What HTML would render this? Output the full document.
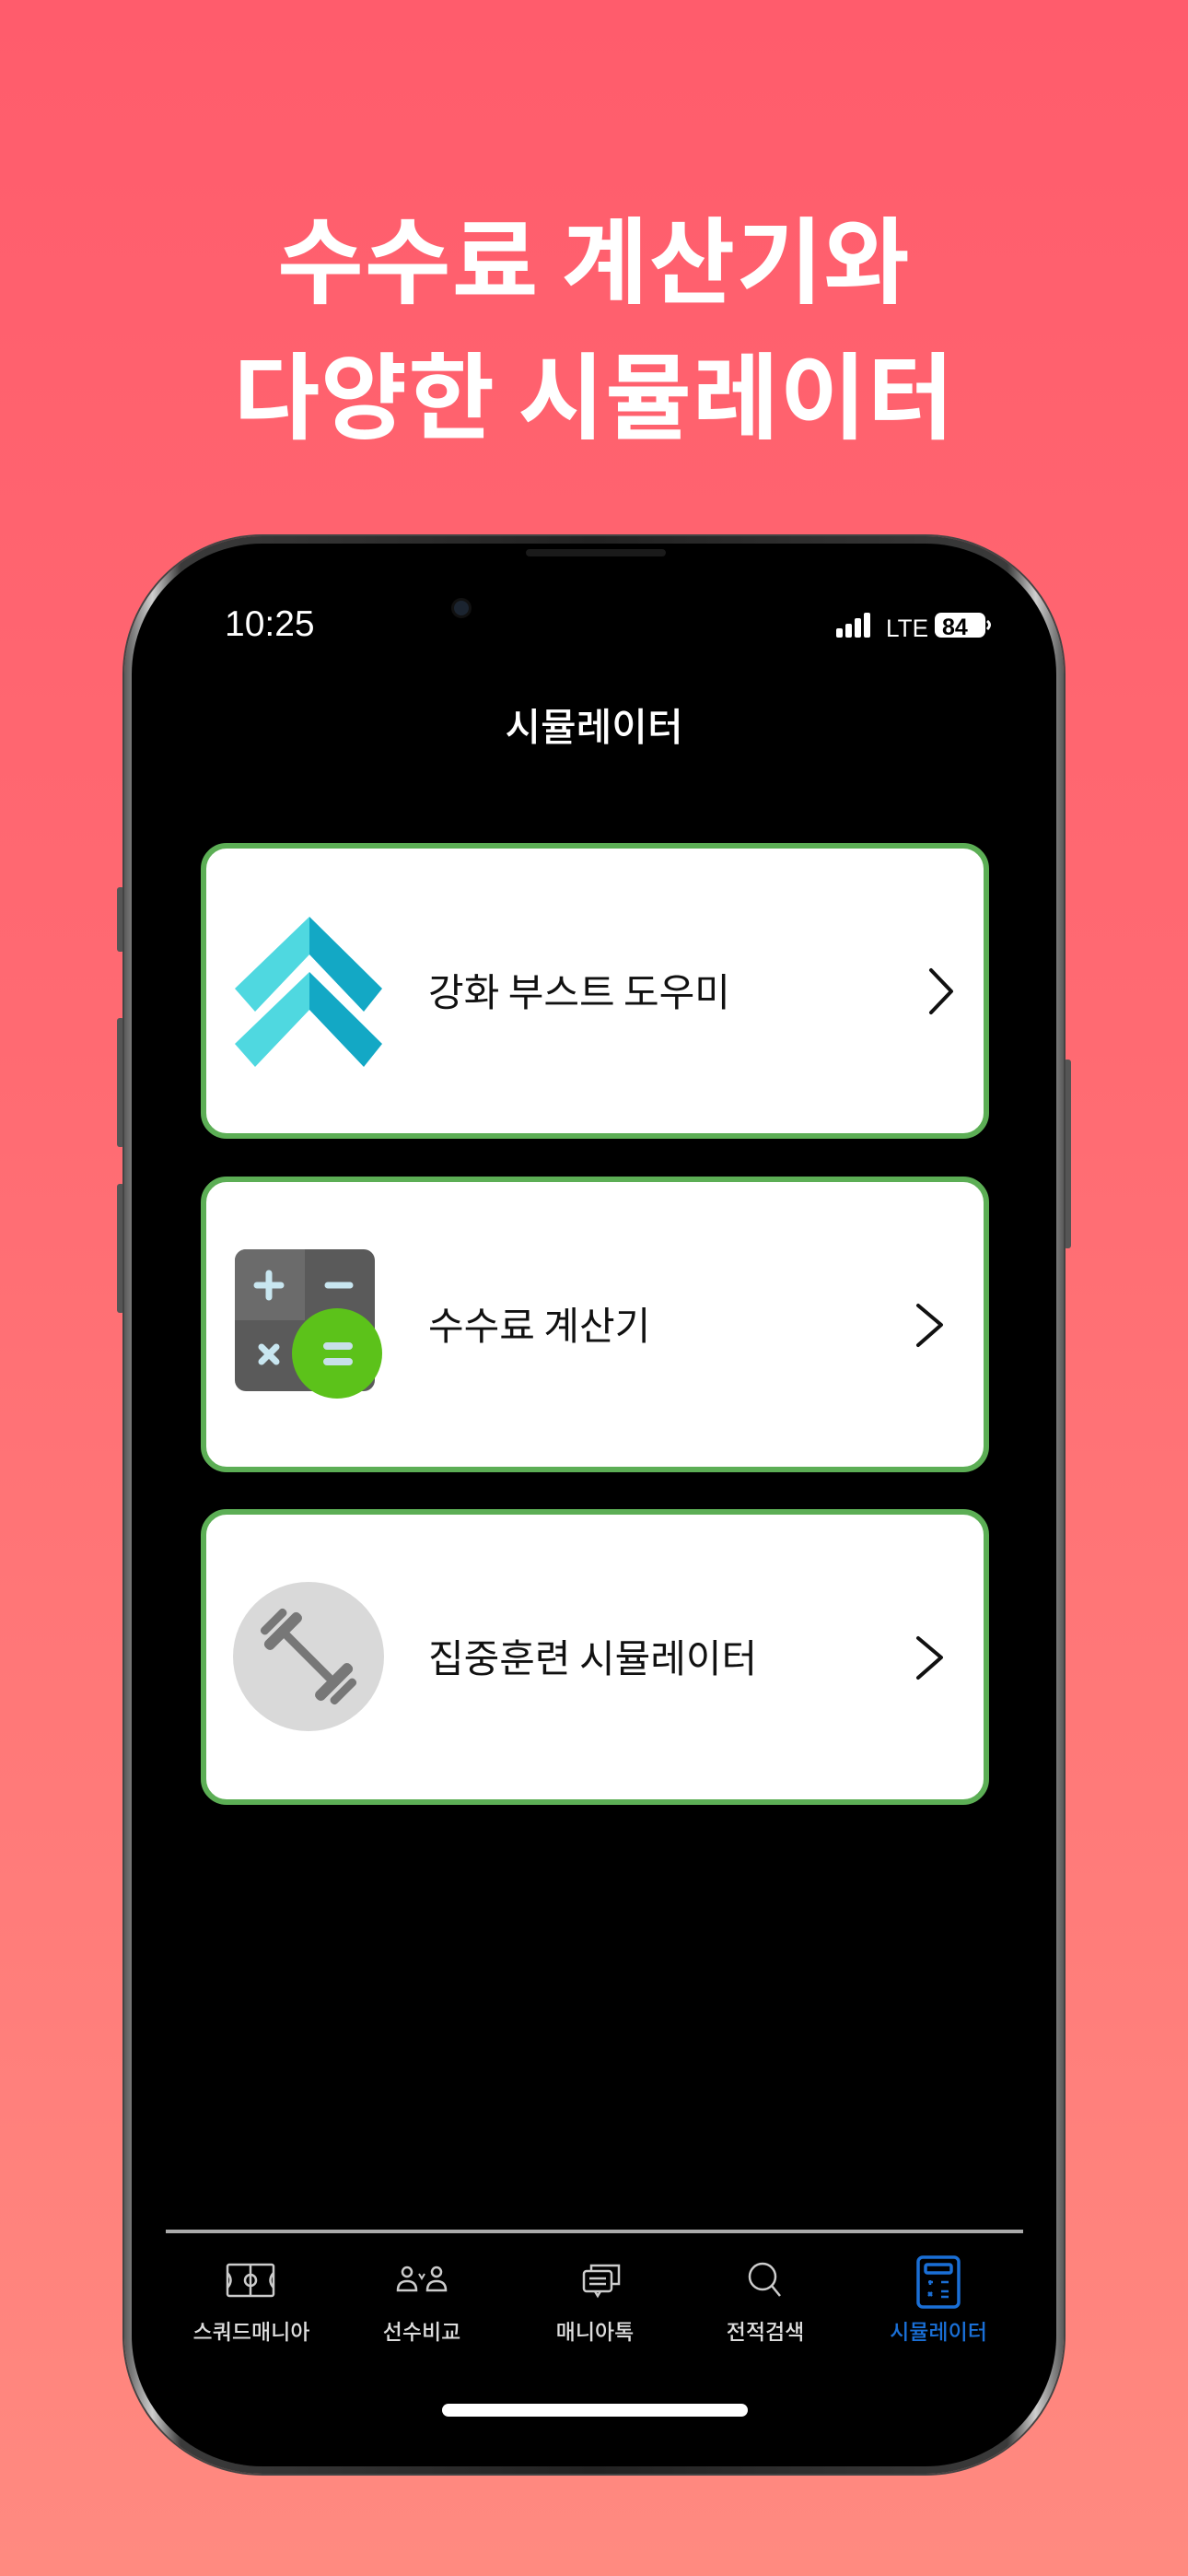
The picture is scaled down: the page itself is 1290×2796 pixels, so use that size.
<!DOCTYPE html>
<html><head><meta charset="utf-8">
<style>
*{margin:0;padding:0;box-sizing:border-box}
html,body{width:1290px;height:2796px;overflow:hidden}
body{background:linear-gradient(180deg,#ff5c6c 0%,#ff6a72 40%,#ff8a80 100%);font-family:"Liberation Sans","Noto Sans CJK KR",sans-serif;position:relative}
.h{position:absolute;left:0;width:1290px;text-align:center;color:#fff;font-weight:700;font-size:102px;letter-spacing:1px;line-height:1;font-family:"Noto Sans CJK KR",sans-serif}
.phone{position:absolute;left:135px;top:582px;width:1020px;height:2103px;border-radius:150px;background:linear-gradient(90deg,#5a5a5a,#cfcfcf 3%,#3a3a3a 6%,#222 50%,#3a3a3a 94%,#cfcfcf 97%,#5a5a5a);box-shadow:0 0 0 2px #444}
.bez{position:absolute;left:8px;top:8px;right:8px;bottom:8px;border-radius:142px;background:#000}
.btn{position:absolute;background:#555;border-radius:3px}
.card{position:absolute;left:218px;width:856px;height:321px;background:#fff;border:6px solid #5cae55;border-radius:28px}
.ct{position:absolute;left:465px;font-size:42px;color:#111;font-family:"Noto Sans CJK KR",sans-serif;font-weight:400;line-height:1}
.tab{position:absolute;top:2512px;width:200px;text-align:center;font-size:23px;color:#ddd;font-family:"Noto Sans CJK KR",sans-serif;font-weight:500}
</style></head><body>
<div class="h" style="top:227px">수수료 계산기와</div>
<div class="h" style="top:374px">다양한 시뮬레이터</div>

<div class="btn" style="left:127px;top:963px;width:8px;height:70px"></div>
<div class="btn" style="left:127px;top:1105px;width:8px;height:140px"></div>
<div class="btn" style="left:127px;top:1285px;width:8px;height:140px"></div>
<div class="btn" style="left:1155px;top:1150px;width:8px;height:205px"></div>

<div class="phone"><div class="bez"></div></div>
<div style="position:absolute;left:571px;top:596px;width:152px;height:8px;border-radius:4px;background:#1a1a1a"></div>
<div style="position:absolute;left:493px;top:652px;width:16px;height:16px;border-radius:50%;background:#1b2430;box-shadow:0 0 0 3px #111"></div>

<div style="position:absolute;left:244px;top:656px;color:#fff;font-size:39px;font-weight:500">10:25</div>
<svg style="position:absolute;left:908px;top:664px" width="170" height="30" viewBox="0 0 170 30">
<rect x="0" y="18" width="7" height="10" rx="2" fill="#fff"/><rect x="10" y="13" width="7" height="15" rx="2" fill="#fff"/><rect x="20" y="7" width="7" height="21" rx="2" fill="#fff"/><rect x="30" y="1" width="7" height="27" rx="2" fill="#fff"/>
<text x="54" y="27" font-family="Liberation Sans" font-size="27" fill="#fff" textLength="46" lengthAdjust="spacingAndGlyphs">LTE</text>
<rect x="107" y="1" width="55" height="27" rx="7" fill="#fff"/><text x="115" y="25" font-family="Liberation Sans" font-weight="700" font-size="25" fill="#000">84</text>
<path d="M164 10 q5 4 0 9" stroke="#fff" stroke-width="3" fill="none"/>
</svg>

<div style="position:absolute;left:0;width:1290px;top:756px;text-align:center;color:#fff;font-size:42px;font-weight:500;font-family:'Noto Sans CJK KR',sans-serif">시뮬레이터</div>

<div class="card" style="top:915px"></div>
<div class="card" style="top:1277px"></div>
<div class="card" style="top:1638px"></div>
<div class="ct" style="top:1054px">강화 부스트 도우미</div>
<div class="ct" style="top:1416px">수수료 계산기</div>
<div class="ct" style="top:1777px">집중훈련 시뮬레이터</div>

<svg style="position:absolute;left:0;top:0" width="1290" height="2796">
<polygon points="336,995 255,1073 277,1098 336,1036" fill="#4fd8e0"/>
<polygon points="336,995 415,1073 395,1098 336,1036" fill="#13a8c5"/>
<polygon points="336,1055 255,1133 277,1158 336,1096" fill="#4fd8e0"/>
<polygon points="336,1055 415,1133 395,1158 336,1096" fill="#13a8c5"/>
<path d="M1011 1053 L1033 1076 L1011 1099" stroke="#111" stroke-width="4" fill="none" stroke-linecap="round" stroke-linejoin="round"/>
<rect x="255" y="1356" width="152" height="154" rx="12" fill="#5a5a5a"/>
<path d="M267 1356 h64 v77 h-76 v-65 a12 12 0 0 1 12 -12z" fill="#6b6b6b"/>
<path d="M292 1382 v26 M279 1395 h26" stroke="#c8e6f0" stroke-width="7" stroke-linecap="round"/>
<path d="M356 1395 h24" stroke="#c8e6f0" stroke-width="7" stroke-linecap="round"/>
<path d="M284 1462 l16 16 M300 1462 l-16 16" stroke="#c8e6f0" stroke-width="7" stroke-linecap="round"/>
<ellipse cx="366" cy="1469" rx="49" ry="49" fill="#5cc21a"/>
<path d="M355 1461 h24 M355 1478 h24" stroke="#c8e0ea" stroke-width="8" stroke-linecap="round"/>
<path d="M997 1417 L1022 1438 L997 1460" stroke="#111" stroke-width="4" fill="none" stroke-linecap="round" stroke-linejoin="round"/>
<ellipse cx="335" cy="1798" rx="82" ry="81" fill="#d9d9d9"/>
<g transform="rotate(45 335 1798)" fill="#777">
<rect x="300" y="1794" width="70" height="9" rx="3"/>
<rect x="290" y="1772" width="12" height="52" rx="5"/>
<rect x="277" y="1780" width="9" height="36" rx="4"/>
<rect x="368" y="1772" width="12" height="52" rx="5"/>
<rect x="384" y="1780" width="9" height="36" rx="4"/>
</g>
<path d="M997 1778 L1022 1799 L997 1821" stroke="#111" stroke-width="4" fill="none" stroke-linecap="round" stroke-linejoin="round"/>
<rect x="180" y="2420" width="931" height="4" fill="#aaa"/>
<g stroke="#ccc" stroke-width="2.5" fill="none">
<rect x="247" y="2458" width="50" height="34" rx="2"/><path d="M272 2458 v34"/><circle cx="272" cy="2475" r="6"/><path d="M247 2467 q7 8 0 16 M297 2467 q-7 8 0 16"/>
<circle cx="442" cy="2466" r="5"/><path d="M432 2486 q0-10 10-10 q10 0 10 10 z"/>
<circle cx="474" cy="2466" r="5"/><path d="M464 2486 q0-10 10-10 q10 0 10 10 z"/><path d="M455 2468 l3 5 l3-5" stroke-width="2"/>
<rect x="634" y="2465" width="30" height="22" rx="3"/><path d="M642 2465 v-6 h30 v20 h-8"/><path d="M640 2473 h18 M640 2479 h18 M646 2487 l3 5 l3-5"/>
<circle cx="828" cy="2471" r="14"/><path d="M838 2481 l9 11"/>
</g>
<g stroke="#1a6fd6" stroke-width="3.5" fill="none">
<rect x="997" y="2450" width="44" height="54" rx="5"/><rect x="1005" y="2458" width="28" height="9" rx="2"/>
<path d="M1008 2477 h5 M1010 2475 v5 M1022 2477 h8 M1008 2488 l4 4 M1012 2488 l-4 4 M1022 2487 h8 M1022 2493 h8" stroke-width="2.5"/>
</g>
<rect x="480" y="2609" width="332" height="14" rx="7" fill="#fff"/>
</svg>
<div class="tab" style="left:173px">스쿼드매니아</div>
<div class="tab" style="left:358px">선수비교</div>
<div class="tab" style="left:546px">매니아톡</div>
<div class="tab" style="left:731px">전적검색</div>
<div class="tab" style="left:919px;color:#1a6fd6">시뮬레이터</div>
</body></html>
